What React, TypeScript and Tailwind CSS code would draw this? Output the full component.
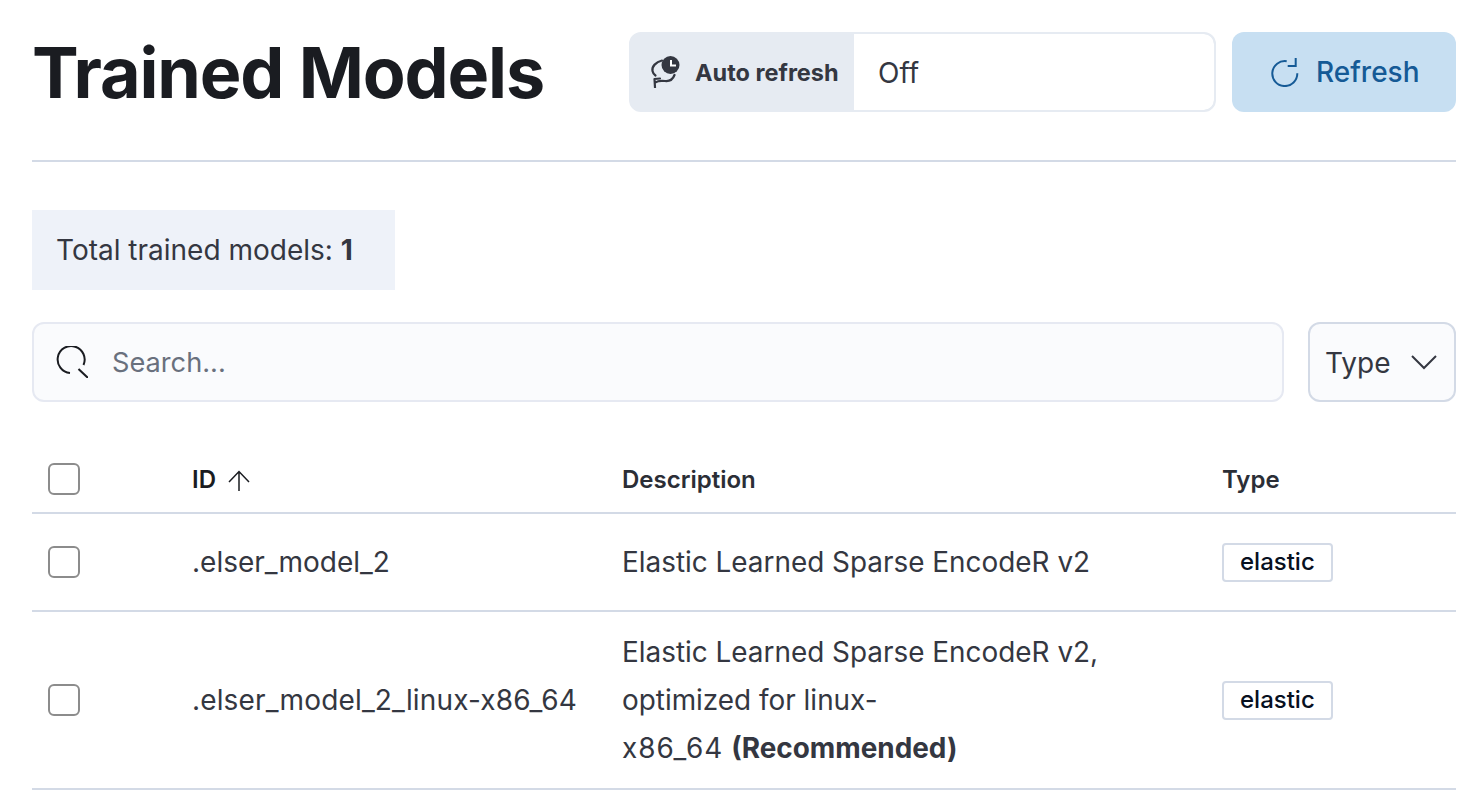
const font = "[font-family:Inter,'Liberation_Sans',sans-serif]";

const Checkbox = () => (
  <div className="w-8 h-8 rounded-md border-2 border-[#8c8c8c] bg-white" />
);

const ElasticBadge = () => (
  <div className="flex items-center">
    <span className="flex items-center h-[39px] px-[16px] rounded-[4px] border-2 border-[#d3dae6] bg-white text-[24px] font-medium text-[#07101f]">
      elastic
    </span>
  </div>
);

const AutoRefreshIcon = () => (
  <svg width="32" height="32" viewBox="0 0 32 32" fill="none" className="text-[#343741]">
    <circle cx="20.5" cy="9" r="9" fill="currentColor" />
    <path d="M21 4v5.500h5" stroke="white" strokeWidth="2" />
    <path d="M12 4.500C6 6 1.500 10.500 2.500 15c.4 2 1.500 3.500 3 4.500" stroke="currentColor" strokeWidth="2.200" strokeLinecap="round" />
    <path d="M24.500 19c-1.500 4-5 6.500-9.500 6-3.500-.4-7-.5-9.500 1.500M10 22.500l-5.500.5.500 8.500" stroke="currentColor" strokeWidth="2.200" strokeLinecap="round" strokeLinejoin="round" />
  </svg>
);

const RefreshIcon = () => (
  <svg width="28" height="30" viewBox="0 0 28 30" fill="none" stroke="#155a96" strokeWidth="2">
    <path d="M15.700 4.200A12.500 12.500 0 1 0 26.300 16.300" />
    <path d="M24.700 1v8h-8" />
  </svg>
);

const SearchIcon = () => (
  <svg width="32" height="32" viewBox="0 0 32 32" fill="none" stroke="#1a1c21" strokeWidth="2">
    <path d="M14 27A13.500 13.500 0 1 1 27.500 19" />
    <path d="M22.500 23L32 32" />
  </svg>
);

const App = () => {
  return (
    <div className={`${font} w-[1484px] h-[804px] overflow-hidden bg-white text-[#343741] pl-8 pr-7`}>
      <header className="h-[162px] border-b-2 border-[#d3dae6] flex items-start pt-8">
        <h1 className="w-[597px] h-20 flex items-center text-[70px] font-bold tracking-[-1.150px] text-[#1a1c21]">Trained Models</h1>
        <div className="w-[587px] h-20 flex rounded-xl bg-[#e6ebf2] border-2 border-[#e6ebf2] overflow-hidden">
          <div className="w-[223px] flex items-center pl-[19px] gap-[13px] text-[23.500px] font-bold whitespace-nowrap">
            <AutoRefreshIcon />
            <span className="pt-0.5">Auto refresh</span>
          </div>
          <div className="flex-1 bg-white flex items-center pl-6 pt-0.5 text-[28px] rounded-r-[10px]">Off</div>
        </div>
        <button className="ml-4 w-[224px] h-20 rounded-xl bg-[#c7dff2] text-[#155a96] flex items-center pl-[39px] gap-[17px] text-[28px] font-medium">
          <RefreshIcon />
          Refresh
        </button>
      </header>

      <div className="mt-12 w-[363px] h-20 bg-[#eef2f9] flex items-center pl-6 text-[28px] whitespace-nowrap">
        Total trained models:&nbsp;<strong>1</strong>
      </div>

      <div className="mt-8 flex gap-6">
        <div className="flex-1 h-20 rounded-xl border-2 border-[#e6e9f2] bg-[#fafbfd] flex items-center pl-[22px] gap-[24px]">
          <SearchIcon />
          <span className="pt-0.5 text-[27.200px] text-[#69707d]">Search...</span>
        </div>
        <div className="w-[148px] h-20 rounded-xl border-2 border-[#d3dae6] bg-[#fafbfd] flex items-center pl-[15px] gap-[19px] text-[28px]">
          <span className="pt-0.5">Type</span>
          <svg width="28" height="16" viewBox="0 0 28 16" fill="none" stroke="#343741" strokeWidth="2">
            <path d="M2 2l12 12L26 2" />
          </svg>
        </div>
      </div>

      <table className="mt-[44px] w-full border-collapse table-fixed">
        <thead>
          <tr className="h-[67px] border-b-2 border-[#d3dae6] text-[24px] text-[#1a1c21]">
            <th className="w-[160px] pl-4 text-left font-normal align-middle"><Checkbox /></th>
            <th className="w-[430px] pt-0.5 text-left font-semibold">
              <span className="inline-flex items-center gap-[11px]">
                ID
                <svg width="24" height="21" viewBox="0 0 24 21" fill="none" stroke="#1a1c21" strokeWidth="1.500">
                  <path d="M2 12L12 1.500 22 12M12 1.500V21" />
                </svg>
              </span>
            </th>
            <th className="w-[600px] pt-0.5 text-left font-semibold text-[#2b2e36]">Description</th>
            <th className="pt-0.5 text-left font-semibold text-[#2b2e36]">Type</th>
          </tr>
        </thead>
        <tbody className="text-[28px]">
          <tr className="h-[98px] border-b-2 border-[#d3dae6]">
            <td className="pl-4"><Checkbox /></td>
            <td>.elser_model_2</td>
            <td className="pt-0.5 text-[27.900px]">Elastic Learned Sparse EncodeR v2</td>
            <td><ElasticBadge /></td>
          </tr>
          <tr className="h-[178px] border-b-2 border-[#d3dae6]">
            <td className="pl-4"><Checkbox /></td>
            <td className="tracking-[0.150px]">.elser_model_2_linux-x86_64</td>
            <td className="text-[27.900px] leading-[48px]">
              Elastic Learned Sparse EncodeR v2,<br />
              optimized for linux-<br />
              <span className="tracking-[1px]">x86_64</span> <strong>(Recommended)</strong>
            </td>
            <td><ElasticBadge /></td>
          </tr>
        </tbody>
      </table>
    </div>
  );
};

export default App;
